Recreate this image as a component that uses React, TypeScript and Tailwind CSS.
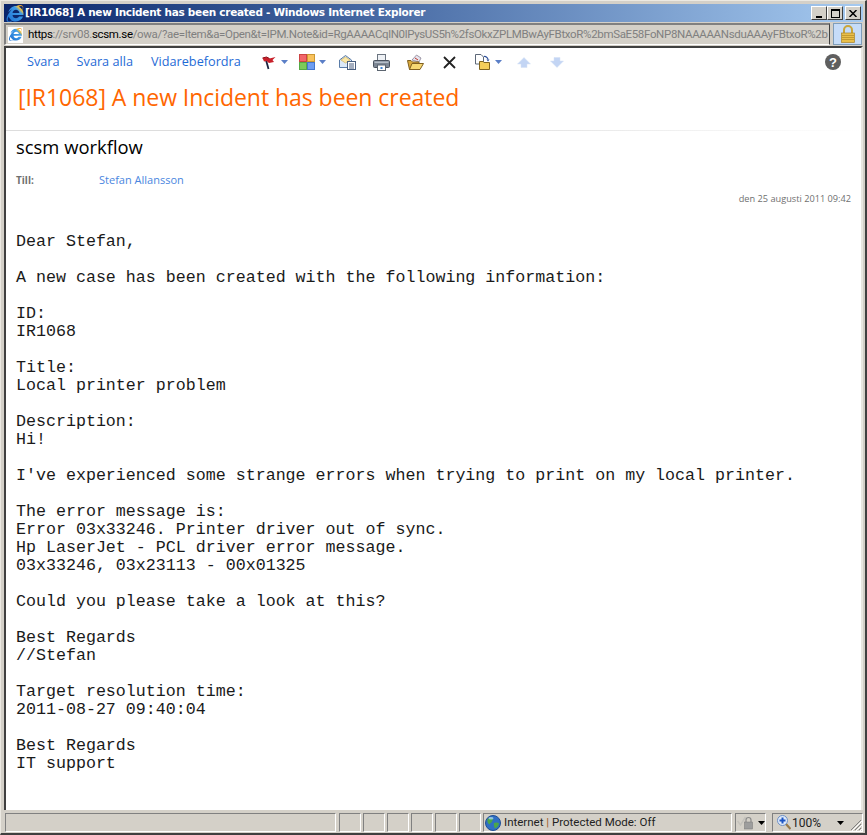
import React from 'react';
import { FaInternetExplorer } from 'react-icons/fa';

const BODY = `Dear Stefan,

A new case has been created with the following information:

ID:
IR1068

Title:
Local printer problem

Description:
Hi!

I've experienced some strange errors when trying to print on my local printer.

The error message is:
Error 03x33246. Printer driver out of sync.
Hp LaserJet - PCL driver error message.
03x33246, 03x23113 - 00x01325

Could you please take a look at this?

Best Regards
//Stefan

Target resolution time:
2011-08-27 09:40:04

Best Regards
IT support`;

const Caret = ({ className = 'text-[#5b7fc7]' }: { className?: string }) => (
  <svg width="7" height="4" viewBox="0 0 7 4" className={className}>
    <path d="M0 0h7L3.5 4z" fill="currentColor" />
  </svg>
);

// gradient shared by the two browser logos
const LogoDefs = () => (
  <svg width="0" height="0" className="absolute">
    <defs>
      <linearGradient id="ie-logo" x1="0" y1="1" x2="1" y2="0">
        <stop offset="0" stopColor="#1d6fd0" />
        <stop offset="0.68" stopColor="#3d9be8" />
        <stop offset="0.8" stopColor="#f5c23c" />
        <stop offset="1" stopColor="#f08a1c" />
      </linearGradient>
    </defs>
  </svg>
);

const FlagIcon = () => (
  <svg width="15" height="15" viewBox="0 0 15 15">
    <path d="M6.500 14L4 5" stroke="#1c2440" strokeWidth="1.800" />
    <path d="M0.500 3l4-1 3 1.500 6-1.500-3 3 1.500 2-5 1-2.500-2-2.500.5z" fill="#c8202a" />
    <path d="M0.500 3l4-1 3 1.500" stroke="#8c1018" fill="none" />
  </svg>
);

const CategoryIcon = () => (
  <svg width="16" height="16" viewBox="0 0 16 16">
    <rect x="0.5" y="0.5" width="7" height="7" fill="#f2666a" stroke="#c44" />
    <rect x="8.5" y="0.5" width="7" height="7" fill="#f9c25c" stroke="#c93" />
    <rect x="0.5" y="8.5" width="7" height="7" fill="#7ccb5a" stroke="#5a4" />
    <rect x="8.5" y="8.5" width="7" height="7" fill="#6f9df0" stroke="#47c" />
  </svg>
);

const ReadMailIcon = () => (
  <svg width="17" height="16" viewBox="0 0 17 16">
    <path d="M0.5 6L6.5 1.5L12.5 6V13.5H0.5z" fill="#dbe8f8" stroke="#5a7ca8" />
    <path d="M2 6L6.5 3L11 6L6.5 9z" fill="#fbe8a8" stroke="#c9a94f" strokeWidth="0.6" />
    <rect x="8.5" y="7.5" width="8" height="8" fill="#fff" stroke="#4a5f80" />
    <path d="M10 10h5M10 12h5M10 14h5" stroke="#4a5f80" />
  </svg>
);

const PrintIcon = () => (
  <svg width="17" height="17" viewBox="0 0 17 17">
    <rect x="4.5" y="0.5" width="8" height="6" fill="#eef1f5" stroke="#6b7480" />
    <rect x="0.5" y="6.5" width="16" height="7" rx="1" fill="#7d8794" stroke="#4a525e" />
    <rect x="1.5" y="7.5" width="14" height="1.5" fill="#b6bec8" />
    <rect x="4.5" y="11" width="8" height="5.5" fill="#fff" stroke="#5c6570" />
    <rect x="7.5" y="13" width="2" height="2" fill="#3f83d0" />
  </svg>
);

const OpenFolderIcon = () => (
  <svg width="17" height="16" viewBox="0 0 17 16">
    <path d="M5 6L9.5 1L14 4L12 8z" fill="#e8e4ee" stroke="#7a7488" strokeWidth="0.7" />
    <path d="M8 4l3 2" stroke="#c0392b" />
    <path d="M0.5 6.5H4L5.5 8H12V15.5H2.5z" fill="#d9a93c" stroke="#806020" />
    <path d="M2.5 15.5L5 9.5H16.5L13 15.5z" fill="#f6d873" stroke="#806020" />
  </svg>
);

const DeleteIcon = () => (
  <svg width="13" height="13" viewBox="0 0 13 13">
    <path d="M1 1L12 12M12 1L1 12" stroke="#222" strokeWidth="1.8" />
  </svg>
);

const MoveIcon = () => (
  <svg width="16" height="16" viewBox="0 0 16 16">
    <path d="M0.5 0.5H6L8.5 3V10H0.5z" fill="#fff" stroke="#5d6878" />
    <path d="M9 2.5A3.5 3.5 0 0 1 13 5.5" stroke="#2c4f9a" strokeWidth="1.2" fill="none" />
    <path d="M11.5 5.5h3l-1.5 2z" fill="#2c4f9a" />
    <path d="M4.5 7.5H8L9 8.5H14.5V15.5H4.5z" fill="#f3cd5b" stroke="#7f6420" />
  </svg>
);

const UpIcon = ({ down = false }: { down?: boolean }) => (
  <svg width="14" height="11" viewBox="0 0 14 11" className={down ? 'rotate-180' : ''}>
    <path d="M7 0.5L13.5 7H10V10.5H4V7H0.5z" fill="#c3d5f4" stroke="#d5e0f5" strokeWidth="0.5" />
  </svg>
);

const HelpIcon = () => (
  <div className="flex h-4 w-4 items-center justify-center rounded-full bg-[#5f5f5f] font-['Liberation_Sans',sans-serif] text-[13px] font-bold leading-none text-white">
    ?
  </div>
);

const LockIcon = () => (
  <svg width="14" height="18" viewBox="0 0 14 18">
    <path d="M3 8V5a4 4 0 0 1 8 0v3" fill="none" stroke="#c9a53a" strokeWidth="2" />
    <rect x="0.5" y="8" width="13" height="9.5" fill="#e9bf4a" stroke="#a8842a" strokeWidth="0.7" />
    <path d="M1 10.5h12M1 12.5h12M1 14.5h12" stroke="#c39a30" />
  </svg>
);

const GlobeIcon = () => (
  <svg width="16" height="16" viewBox="0 0 16 16">
    <circle cx="8" cy="8" r="7.5" fill="#2f6fc4" stroke="#1f4f96" />
    <path d="M3 3.5c2-1.5 4-1 5 0 .5 1-1 2-1 3s-2 1.5-2.500 3C3 8.500 1.500 6 3 3.500z" fill="#4ca64a" />
    <path d="M9 8c2-1 4-.5 5 .5-.5 2.500-2 4-4 5-1-1.500-1.500-4-1-5.500z" fill="#4ca64a" />
    <ellipse cx="6" cy="3.200" rx="2.500" ry="1.200" fill="#a5d0f5" opacity="0.8" />
  </svg>
);

const ShieldIcon = () => (
  <svg width="17" height="15" viewBox="0 0 17 15">
    <path d="M0.500 6l3 4 5-8" fill="none" stroke="#c4c2bc" strokeWidth="1.500" />
    <path d="M9 7V5a2.500 2.500 0 0 1 5 0v2" fill="none" stroke="#8b8b8b" strokeWidth="1.200" />
    <rect x="7.500" y="7" width="8" height="7" fill="#9d9d9d" stroke="#777" strokeWidth="0.500" />
  </svg>
);

const ZoomIcon = () => (
  <svg width="14" height="15" viewBox="0 0 14 15">
    <path d="M9 9l4.500 5" stroke="#9a7b4a" strokeWidth="2.200" />
    <circle cx="5.500" cy="5.500" r="5" fill="#dfeafa" stroke="#6d8fc4" />
    <path d="M2.500 5.500h6M5.500 2.500v6" stroke="#1c55c4" strokeWidth="2" />
  </svg>
);

const ResizeGrip = () => (
  <svg width="12" height="12" viewBox="0 0 12 12">
    <path d="M11 1L1 11M11 5L5 11M11 9L9 11" stroke="#808080" />
    <path d="M12 2L2 12M12 6L6 12M12 10L10 12" stroke="#ffffff" />
  </svg>
);

// sunken cell of the classic status bar
const StatusCell = ({ className = '', children }: { className?: string; children?: React.ReactNode }) => (
  <div className={`flex h-[19px] items-center border-t border-l border-t-[#808080] border-l-[#808080] border-r border-b border-r-white border-b-white ${className}`}>
    {children}
  </div>
);

const ActionLink = ({ label }: { label: string }) => (
  <span className="text-[#1f6bd6]">{label}</span>
);

const ICON_ROW_CLASS = 'flex items-center';

export default function App() {
  return (
    <div className="flex h-[835px] w-[867px] flex-col overflow-hidden border-t border-l border-t-[#ece9e2] border-l-[#ece9e2] border-r-2 border-b-2 border-r-[#404040] border-b-[#404040] bg-[#d4d0c8] pt-[3px] pl-[3px] pr-[2px] font-['Open_Sans',sans-serif]">
      <LogoDefs />

      {/* title bar */}
      <div className="flex h-[18px] shrink-0 items-center bg-gradient-to-r from-[#0a246a] to-[#a6caf0] pr-[2px]">
        <FaInternetExplorer fill="url(#ie-logo)" className="ml-[2px] h-[17px] w-[18px]" />
        <span className="ml-[1px] whitespace-nowrap font-['DejaVu_Sans',sans-serif] text-[10.5px] font-bold tracking-[-0.28px] text-white">
          [IR1068] A new Incident has been created - Windows Internet Explorer
        </span>
        <div className="ml-auto flex items-center">
          <div className="flex h-[14px] w-[16px] items-end justify-center border border-t-white border-l-white border-r-[#404040] border-b-[#404040] bg-[#d4d0c8] pb-[1px]">
            <div className="h-[2px] w-[6px] bg-black" />
          </div>
          <div className="flex h-[14px] w-[16px] items-center justify-center border border-t-white border-l-white border-r-[#404040] border-b-[#404040] bg-[#d4d0c8]">
            <div className="h-[9px] w-[9px] border border-t-2 border-black" />
          </div>
          <div className="ml-[2px] flex h-[14px] w-[16px] items-center justify-center border border-t-white border-l-white border-r-[#404040] border-b-[#404040] bg-[#d4d0c8]">
            <svg width="8" height="7" viewBox="0 0 8 7">
              <path d="M0.500 0L7.500 7M7.500 0L0.500 7" stroke="#000" strokeWidth="1.500" />
            </svg>
          </div>
        </div>
      </div>

      {/* address bar */}
      <div className="mt-[1px] flex h-[22px] shrink-0 gap-[3px]">
        <div className="flex w-[826px] items-center overflow-hidden border border-t-2 border-l-2 border-t-[#808080] border-l-[#808080] border-r-[#404040] border-b-white bg-[#d4d0c8] pl-[2px]">
          <div className="relative flex h-[16px] w-[15px] shrink-0 items-center justify-center bg-white">
            <FaInternetExplorer fill="url(#ie-logo)" className="h-[13px] w-[13px]" />
          </div>
          <span className="ml-[5px] whitespace-nowrap font-['Roboto',sans-serif] text-[11.5px] tracking-[-0.34px] text-[#808080]">
            <span className="text-black">https</span>://srv08.<span className="text-black">scsm.se</span>/owa/?ae=Item&amp;a=Open&amp;t=IPM.Note&amp;id=RgAAAACqlN0lPysUS5h%2fsOkxZPLMBwAyFBtxoR%2bmSaE58FoNP8NAAAAANsduAAAyFBtxoR%2b
          </span>
        </div>
        <div className="flex w-[29px] items-center justify-center border border-[#7f9db9] bg-[#c6dcf8]">
          <LockIcon />
        </div>
      </div>

      {/* page */}
      <div className="mt-[1px] flex h-[764px] shrink-0 flex-col border-t-2 border-l-2 border-t-[#404040] border-l-[#404040] border-r-2 border-r-[#e8e6e0] bg-white">
        <div className="flex h-[28px] items-center pr-[20px] pl-[21px] text-[12.7px]">
          <ActionLink label="Svara" />
          <div className="ml-[17px]"><ActionLink label="Svara alla" /></div>
          <div className="ml-[18px]"><ActionLink label="Vidarebefordra" /></div>
          <div className={`${ICON_ROW_CLASS} ml-[21px] gap-[4px]`}><FlagIcon /><Caret /></div>
          <div className={`${ICON_ROW_CLASS} ml-[11px] gap-[4px]`}><CategoryIcon /><Caret /></div>
          <div className="ml-[13px]"><ReadMailIcon /></div>
          <div className="ml-[17px]"><PrintIcon /></div>
          <div className="ml-[17px]"><OpenFolderIcon /></div>
          <div className="ml-[19px]"><DeleteIcon /></div>
          <div className={`${ICON_ROW_CLASS} ml-[19px] gap-[4px]`}><MoveIcon /><Caret /></div>
          <div className="ml-[15px]"><UpIcon /></div>
          <div className="ml-[19px]"><UpIcon down /></div>
          <div className="ml-auto"><HelpIcon /></div>
        </div>

        <h1 className="mt-[5px] pl-[12px] text-[23px] font-normal leading-[32px] tracking-[-0.05px] text-[#ff6600]">
          [IR1068] A new Incident has been created
        </h1>

        <div className="mt-[17px] h-px bg-gradient-to-r from-[#dddddd] via-[#dddddd] to-white" />

        <div className="mt-[2px] pl-[10px] text-[18.4px] leading-[28px] text-black">scsm workflow</div>

        <div className="mt-[11px] flex items-center pl-[10px] leading-[16px]">
          <span className="w-[83px] text-[10px] font-bold text-[#6f6f6f]">Till:</span>
          <span className="text-[11px] text-[#4a86e0]">Stefan Allansson</span>
        </div>

        <div className="mt-[3px] pr-[10px] text-right text-[9.2px] leading-[16px] text-[#6f6f6f]">
          den 25 augusti 2011 09:42
        </div>

        <pre className="mt-[26px] pl-[10px] font-['Liberation_Mono',monospace] text-[16.65px] leading-[18px] text-[#1a1a1a]">
          {BODY}
        </pre>
      </div>

      {/* status bar */}
      <div className="mt-[3px] flex h-[19px] shrink-0 gap-[2px]">
        <StatusCell className="ml-[1px] w-[331px]" />
        <StatusCell className="ml-[1px] w-[22px]" />
        <StatusCell className="w-[22px]" />
        <StatusCell className="w-[22px]" />
        <StatusCell className="w-[22px]" />
        <StatusCell className="w-[22px]" />
        <StatusCell className="w-[22px]" />
        <StatusCell className="w-[249px] pl-[1px] font-['Roboto',sans-serif] text-[11.5px] text-[#222222]">
          <GlobeIcon />
          <span className="ml-[3px] whitespace-nowrap">
            Internet <span className="text-[#a0622a]">|</span> Protected Mode: Off
          </span>
        </StatusCell>
        <StatusCell className="ml-[1px] w-[31px] gap-[4px] pl-[1px]">
          <ShieldIcon />
          <Caret className="text-black" />
        </StatusCell>
        <StatusCell className="ml-[4px] w-[91px] pl-[4px] font-['Roboto',sans-serif] text-[12px] text-[#222222]">
          <ZoomIcon />
          <span className="ml-[1px]">100%</span>
          <Caret className="ml-[16px] text-black" />
          <div className="mt-auto ml-auto">
            <ResizeGrip />
          </div>
        </StatusCell>
      </div>
    </div>
  );
}
